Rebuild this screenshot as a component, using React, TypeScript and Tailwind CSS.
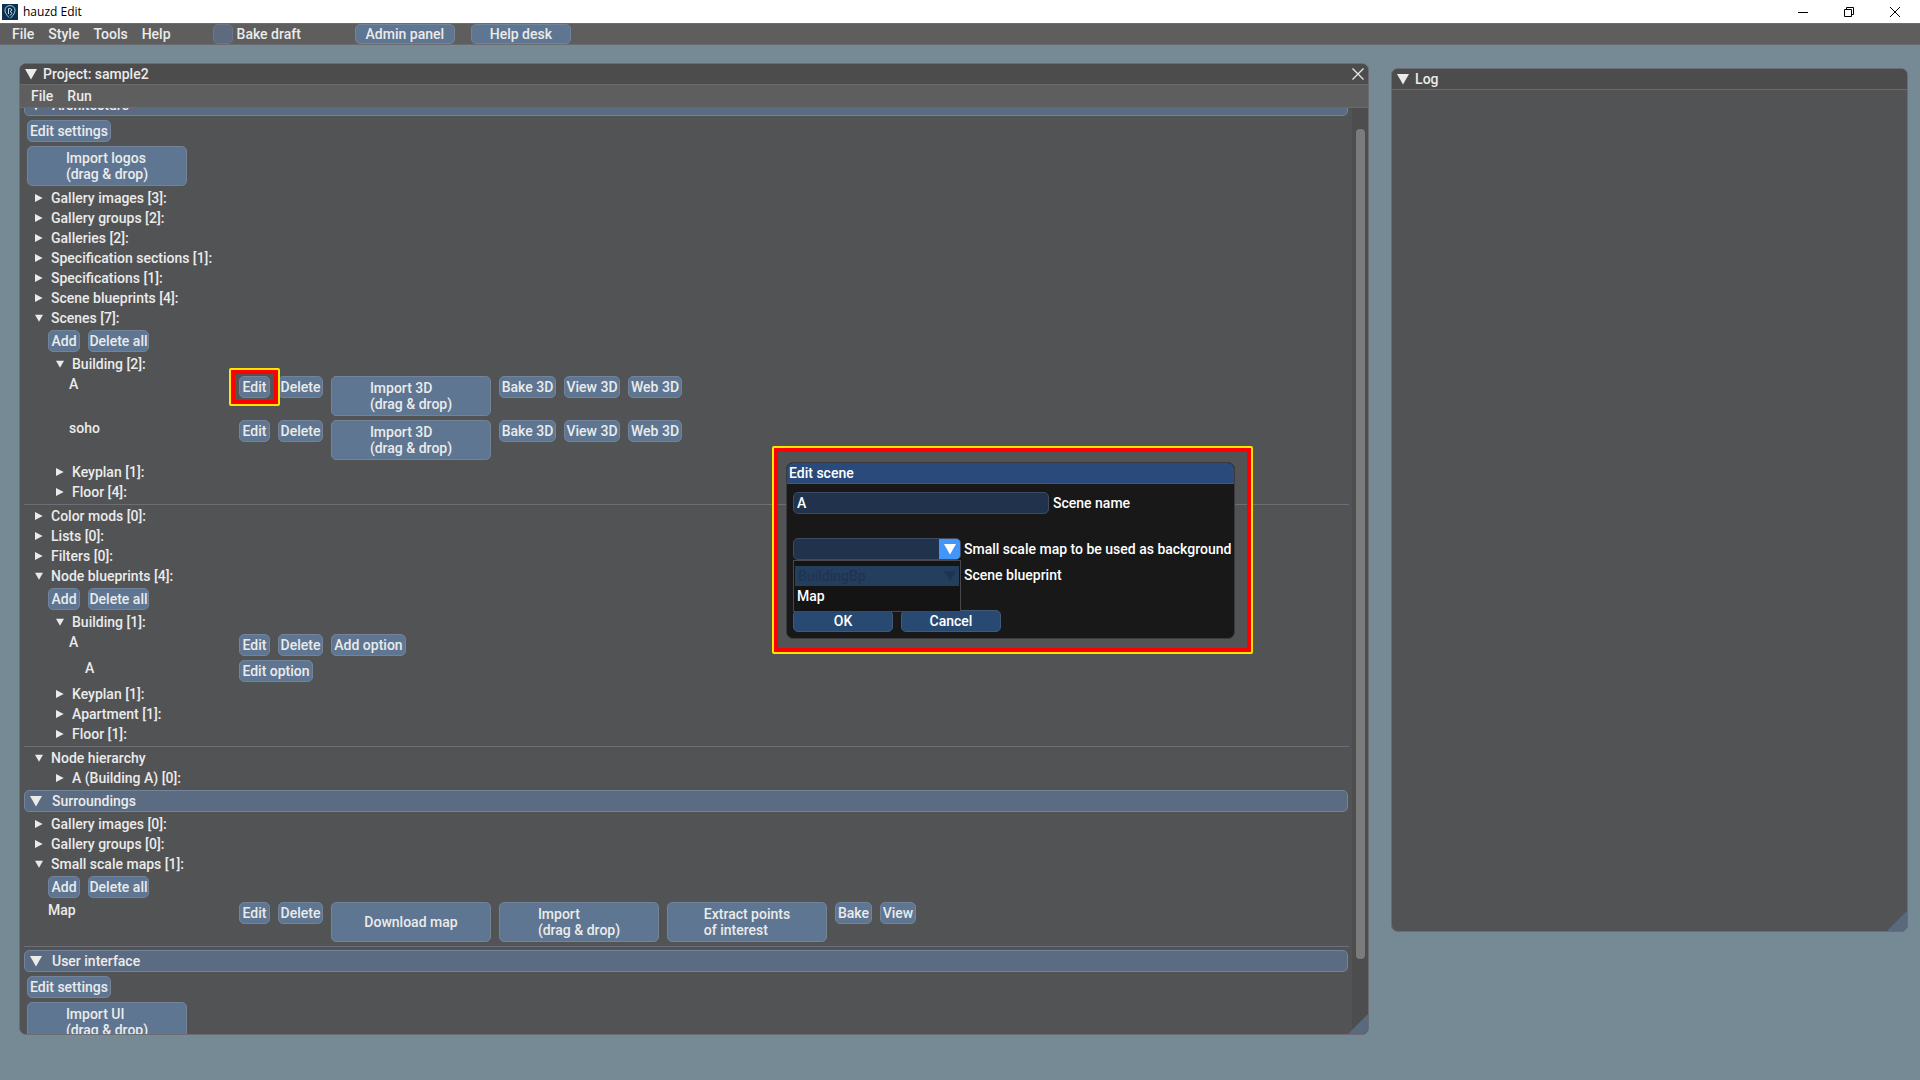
import React from "react";

const btn =
  "shrink-0 whitespace-nowrap rounded-[5px] border border-[#73839a] bg-[#5e7692] leading-4 text-[#ebebeb]";

function Btn({ children, w }: { children: React.ReactNode; w: string }) {
  return <button className={btn + " h-[22px] " + w}>{children}</button>;
}

function BigBtn({ lines }: { lines: string[] }) {
  return (
    <button className={btn + " flex h-10 w-40 items-center justify-center"}>
      <span className="text-left">
        {lines.map((l) => (
          <span key={l} className="block">
            {l}
          </span>
        ))}
      </span>
    </button>
  );
}

function Arrow({ open, big }: { open?: boolean; big?: boolean }) {
  return (
    <svg
      viewBox="0 0 12 12"
      className={big ? "size-3 shrink-0" : "size-2 shrink-0"}
      fill="currentColor"
      aria-hidden="true"
    >
      {open ? <path d="M0 1H12L6 11.5Z" /> : <path d="M0 0V12L11.5 6Z" />}
    </svg>
  );
}

function Node({ label, open, sub }: { label: string; open?: boolean; sub?: boolean }) {
  return (
    <button
      aria-expanded={!!open}
      className={
        (sub ? "ml-8 " : "ml-[11px] ") +
        "flex h-4 items-center gap-2 self-start whitespace-nowrap text-left leading-4"
      }
    >
      <Arrow open={open} />
      {label}
    </button>
  );
}

function Header({ label }: { label: string }) {
  return (
    <button
      aria-expanded="true"
      className="mr-1 flex h-[22px] shrink-0 items-center gap-2.5 rounded-[5px] border border-[#73839a] bg-[#5b6c82] px-[5px] text-left leading-4"
    >
      <Arrow open big />
      {label}
    </button>
  );
}

function Separator() {
  return <hr className="-mb-px mr-[3px] h-px shrink-0 border-0 bg-[#6e6e76]" />;
}

function Row({ label, pad, children }: { label: string; pad: string; children: React.ReactNode }) {
  return (
    <div className="flex shrink-0 items-start">
      <span className={pad + " w-[215px] shrink-0 leading-4"}>{label}</span>
      <div className="flex items-start gap-2">{children}</div>
    </div>
  );
}

function AddDelete() {
  return (
    <div className="ml-6 flex shrink-0 gap-2">
      <Btn w="w-8">Add</Btn>
      <Btn w="w-[61px]">Delete all</Btn>
    </div>
  );
}

function EditMarked() {
  return (
    <div className="relative flex">
      <Btn w="w-[31px]">Edit</Btn>
      <div className="pointer-events-none absolute -inset-x-2.5 -inset-y-2 rounded-xs border-2 border-[#ffe600]">
        <div className="size-full border-4 border-[#ff0000]" />
      </div>
    </div>
  );
}

function SceneRow({ label, marked }: { label: string; marked?: boolean }) {
  return (
    <Row label={label} pad="pl-[45px]">
      {marked ? (
        <div className="z-10">
          <EditMarked />
        </div>
      ) : (
        <Btn w="w-[31px]">Edit</Btn>
      )}
      <Btn w="w-[45px]">Delete</Btn>
      <BigBtn lines={["Import 3D", "(drag & drop)"]} />
      <Btn w="w-[57px]">Bake 3D</Btn>
      <Btn w="w-14">View 3D</Btn>
      <Btn w="w-[54px]">Web 3D</Btn>
    </Row>
  );
}

function Grip() {
  return (
    <svg viewBox="0 0 20 20" className="absolute bottom-0 right-0 size-5" aria-hidden="true">
      <path d="M20 0V20H0Z" fill="#5a6a7e" />
    </svg>
  );
}

function TitleBar() {
  return (
    <header className="flex h-[23px] shrink-0 items-center bg-white text-black">
      <svg viewBox="0 0 16 16" className="ml-0.5 size-4" aria-hidden="true">
        <rect width="16" height="16" fill="#0b3050" />
        <path
          d="M7 13.5C4.6 11 3 8.8 3 6.2C3 3.4 5 1.6 8 1.6C11 1.6 13 3.4 13 6.2C13 8.8 11.4 11 8.6 14.2"
          fill="none"
          stroke="#a9dcea"
          strokeWidth="0.9"
        />
        <path
          d="M6.5 10V4.6H8.4C10 4.6 10 7.2 8.4 7.2L9.8 9.6L8 11.6"
          fill="none"
          stroke="#d8f0f6"
          strokeWidth="0.9"
        />
      </svg>
      <span className="ml-[5px] font-['Open_Sans',sans-serif] text-xs font-normal">hauzd Edit</span>
      <div className="ml-auto mr-0.5 flex items-center">
        <button aria-label="Minimize" className="flex w-[46px] justify-center">
          <svg viewBox="0 0 10 10" className="size-2.5" stroke="#000" fill="none">
            <path d="M0 5.5H10" />
          </svg>
        </button>
        <button aria-label="Restore" className="flex w-[46px] justify-center">
          <svg viewBox="0 0 10 10" className="size-2.5" stroke="#000" fill="none">
            <path d="M0.5 2.5H7.5V9.5H0.5ZM2.5 2.5V0.5H9.5V7.5H7.5" />
          </svg>
        </button>
        <button aria-label="Close" className="flex w-[46px] justify-center">
          <svg viewBox="0 0 10 10" className="size-2.5" stroke="#000" fill="none">
            <path d="M0 0L10 10M10 0L0 10" />
          </svg>
        </button>
      </div>
    </header>
  );
}

function MenuBar() {
  return (
    <nav className="flex h-[22px] shrink-0 items-center border-y border-[#6b6b70] bg-[#5e5e5e] pl-3">
      <div className="flex gap-3.5">
        <button>File</button>
        <button>Style</button>
        <button>Tools</button>
        <button>Help</button>
      </div>
      <label className="ml-[42px] flex items-center gap-1">
        <input
          type="checkbox"
          className="size-5 appearance-none rounded-[5px] border border-[#6b7686] bg-[#5e6b7f]"
        />
        Bake draft
      </label>
      <div className="ml-[54px] flex gap-4">
        <button className={btn + " h-5 w-[100px]"}>Admin panel</button>
        <button className={btn + " h-5 w-[100px]"}>Help desk</button>
      </div>
    </nav>
  );
}

function ProjectWindow() {
  return (
    <section className="relative mt-[18px] flex h-[972px] min-w-0 flex-[1351] flex-col overflow-hidden rounded-[7px] border border-[#6c6c72] bg-[#525354]">
      <div className="flex h-[21px] shrink-0 items-center gap-1.5 border-b border-[#6b6b6f] bg-[#4c4c4c] pl-[5px] pr-1">
        <Arrow open big />
        <h2 className="leading-4">Project: sample2</h2>
        <button aria-label="Close project" className="ml-auto">
          <svg viewBox="0 0 12 12" className="size-3" stroke="#ebebeb" strokeWidth="1.2" fill="none">
            <path d="M0.5 0.5L11.5 11.5M11.5 0.5L0.5 11.5" />
          </svg>
        </button>
      </div>
      <div className="z-10 flex h-[23px] shrink-0 items-center gap-3.5 border-b border-[#6b6b6f] bg-[#5e5e5e] pl-[11px]">
        <button>File</button>
        <button>Run</button>
      </div>
      <div className="flex min-h-0 flex-1">
        <div className="-mt-[14px] flex min-w-0 flex-1 flex-col gap-1 pl-1">
          <Header label="Architecture" />
          <div className="ml-[3px] flex shrink-0">
            <Btn w="w-[84px]">Edit settings</Btn>
          </div>
          <div className="ml-[3px] flex shrink-0">
            <BigBtn lines={["Import logos", "(drag & drop)"]} />
          </div>
          <Node label="Gallery images [3]:" />
          <Node label="Gallery groups [2]:" />
          <Node label="Galleries [2]:" />
          <Node label="Specification sections [1]:" />
          <Node label="Specifications [1]:" />
          <Node label="Scene blueprints [4]:" />
          <Node label="Scenes [7]:" open />
          <AddDelete />
          <Node label="Building [2]:" open sub />
          <SceneRow label="A" marked />
          <SceneRow label="soho" />
          <Node label="Keyplan [1]:" sub />
          <Node label="Floor [4]:" sub />
          <Separator />
          <Node label="Color mods [0]:" />
          <Node label="Lists [0]:" />
          <Node label="Filters [0]:" />
          <Node label="Node blueprints [4]:" open />
          <AddDelete />
          <Node label="Building [1]:" open sub />
          <Row label="A" pad="pl-[45px]">
            <Btn w="w-[31px]">Edit</Btn>
            <Btn w="w-[45px]">Delete</Btn>
            <Btn w="w-[75px]">Add option</Btn>
          </Row>
          <Row label="A" pad="pl-[61px]">
            <Btn w="w-[74px]">Edit option</Btn>
          </Row>
          <Node label="Keyplan [1]:" sub />
          <Node label="Apartment [1]:" sub />
          <Node label="Floor [1]:" sub />
          <Separator />
          <Node label="Node hierarchy" open />
          <Node label="A (Building A) [0]:" sub />
          <Header label="Surroundings" />
          <Node label="Gallery images [0]:" />
          <Node label="Gallery groups [0]:" />
          <Node label="Small scale maps [1]:" open />
          <AddDelete />
          <Row label="Map" pad="pl-6">
            <Btn w="w-[31px]">Edit</Btn>
            <Btn w="w-[45px]">Delete</Btn>
            <BigBtn lines={["Download map"]} />
            <BigBtn lines={["Import", "(drag & drop)"]} />
            <BigBtn lines={["Extract points", "of interest"]} />
            <Btn w="w-[37px]">Bake</Btn>
            <Btn w="w-9">View</Btn>
          </Row>
          <Separator />
          <Header label="User interface" />
          <div className="ml-[3px] flex shrink-0">
            <Btn w="w-[84px]">Edit settings</Btn>
          </div>
          <div className="ml-[3px] flex shrink-0">
            <BigBtn lines={["Import UI", "(drag & drop)"]} />
          </div>
        </div>
        <div className="w-4 shrink-0 bg-[#4d4d4e] px-[3px] pt-[21px]">
          <div className="ml-px h-[830px] w-[9px] rounded-[4px] bg-[#7b7b7b]" />
        </div>
      </div>
      <Grip />
    </section>
  );
}

function LogWindow() {
  return (
    <section className="relative mt-[23px] h-[864px] min-w-0 flex-[516] overflow-hidden rounded-[7px] border border-[#6c6c72] bg-[#525354]">
      <div className="flex h-[21px] items-center gap-1.5 border-b border-[#6b6b6f] bg-[#4c4c4c] px-[5px]">
        <Arrow open big />
        <h2 className="leading-4">Log</h2>
      </div>
      <Grip />
    </section>
  );
}

function EditSceneDialog() {
  return (
    <div className="absolute left-[772px] top-[446px] rounded-xs border-2 border-[#ffe600]">
      <div className="border-4 border-[#ff0000] pb-[9px] pl-2 pr-3 pt-2.5">
        <form
          role="dialog"
          aria-label="Edit scene"
          className="w-[449px] rounded-[7px] border border-[#3a3a40] bg-[#181818] text-white"
        >
          <h2 className="flex h-[21px] items-center rounded-t-[6px] border-b border-[#44577a] bg-[#294a7a] pl-0.5">
            Edit scene
          </h2>
          <div className="flex flex-col px-1.5 pb-1.5 pt-2">
            <div className="flex items-center gap-1">
              <input
                id="scene-name"
                defaultValue="A"
                className="h-[22px] w-64 rounded-[5px] border border-[#3f4b63] bg-[#21324d] px-[3px] outline-none"
              />
              <label htmlFor="scene-name">Scene name</label>
            </div>
            <div className="relative mt-6 flex items-center gap-[3px]">
              <button
                type="button"
                id="small-map"
                aria-haspopup="listbox"
                aria-expanded="true"
                className="flex h-[22px] w-[168px] shrink-0 justify-end overflow-hidden rounded-[5px] border border-[#3f4b63] bg-[#21324d]"
              >
                <span className="flex h-full w-[21px] items-center justify-center bg-[#4296fa]">
                  <Arrow open big />
                </span>
              </button>
              <label htmlFor="small-map" className="whitespace-nowrap">
                Small scale map to be used as background
              </label>
              <ul
                role="listbox"
                aria-label="Small scale maps"
                className="absolute left-0 top-[22px] z-10 h-[52px] w-[168px] border border-[#47474d] bg-[#141414] px-px py-[5px]"
              >
                <li
                  role="option"
                  aria-selected="true"
                  className="flex h-5 items-center justify-between bg-[#243e5e] px-[3px] text-[#1f3450]"
                >
                  BuildingBp
                  <Arrow open big />
                </li>
                <li role="option" aria-selected="false" className="flex h-5 items-center px-0.5">
                  Map
                </li>
              </ul>
            </div>
            <div className="mt-1 flex h-[22px] items-center">
              <span className="ml-[171px]">Scene blueprint</span>
            </div>
            <div className="mt-6 flex gap-2">
              <button type="button" className="h-[22px] w-[100px] rounded-[5px] border border-[#43597a] bg-[#284a72]">
                OK
              </button>
              <button type="button" className="h-[22px] w-[100px] rounded-[5px] border border-[#43597a] bg-[#284a72]">
                Cancel
              </button>
            </div>
          </div>
        </form>
      </div>
    </div>
  );
}

export default function App() {
  return (
    <div className="relative flex min-h-screen flex-col bg-[#758a94] font-[Roboto,sans-serif] text-sm font-medium leading-4 text-[#ebebeb]">
      <TitleBar />
      <MenuBar />
      <main className="flex flex-1 items-start gap-[22px] pl-[19px] pr-3">
        <ProjectWindow />
        <LogWindow />
      </main>
      <EditSceneDialog />
    </div>
  );
}
